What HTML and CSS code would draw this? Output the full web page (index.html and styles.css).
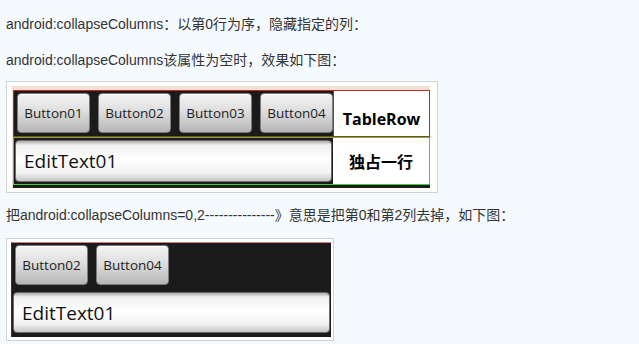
FILE: index.html
```html
<!DOCTYPE html>
<html lang="zh-CN">
<head>
  <meta charset="UTF-8">
  <title>collapseColumns</title>
  <link rel="stylesheet" href="styles.css">
</head>
<body>

  <p class="note">android:collapseColumns：以第0行为序，隐藏指定的列：</p>
  <p class="note">android:collapseColumns该属性为空时，效果如下图：</p>

  <div class="frame frame-wide">
    <div class="screen screen-full">
      <div class="trow trow-red">
        <div class="btn-bar">
          <span class="droid-btn">Button01</span>
          <span class="droid-btn">Button02</span>
          <span class="droid-btn">Button03</span>
          <span class="droid-btn">Button04</span>
        </div>
        <div class="side-cell side-label">TableRow</div>
      </div>
      <div class="trow trow-green">
        <div class="edit-slot">
          <div class="edit-text">EditText01</div>
        </div>
        <div class="side-cell side-cjk">独占一行</div>
      </div>
    </div>
  </div>

  <p class="note note-after">把android:collapseColumns=0,2---------------》意思是把第0和第2列去掉，如下图：</p>

  <div class="frame frame-narrow">
    <div class="screen screen-cut">
      <div class="btn-bar btn-bar-cut">
        <span class="droid-btn">Button02</span>
        <span class="droid-btn">Button04</span>
      </div>
      <div class="edit-slot edit-slot-cut">
        <div class="edit-text">EditText01</div>
      </div>
    </div>
  </div>

</body>
</html>
```

FILE: styles.css
```css
*{
  margin: 0;
  padding: 0;
  box-sizing: border-box;
}

body{
  background-color: #f5faff;
  color: #333333;
  font: 14px "Liberation Sans", "Noto Sans CJK SC", sans-serif;
  padding: 0 6px;
}

.note{
  line-height: 24px;
  margin: 12px 0 9px;
}
.note-after{
  margin: 10px 0 11px;
}

/* picture frames */
.frame{
  width: fit-content;
  background-color: #ffffff;
  border: 1px solid #cfd3d6;
}
.frame-wide{
  padding: 4px 7px 4px 5px;
}
.frame-narrow{
  padding: 3px 2px 3px 4px;
}

.screen{
  background-color: #1b1b1b;
  font-family: "Open Sans", "Noto Sans", sans-serif;
}
.screen-full{
  width: 418px;
  border-top: 4px solid #f0e1d3;
  border-left: 1px solid #f0e1d3;
  padding-bottom: 3px;
}
.screen-cut{
  width: 320px;
  border-top: 1px solid #d9787a;
  border-left: 1px solid #6e1c1c;
  padding-bottom: 4px;
}

/* table rows */
.trow{
  display: flex;
  width: 417px;
}
.trow-red{
  height: 47px;
  border: 1px solid #c0262c;
}
.trow-green{
  height: 48px;
  border: 1px solid #3ccf3c;
}

.btn-bar{
  display: flex;
  gap: 8px;
  width: 319px;
  padding: 2px 0 0 3px;
}
.trow-red .btn-bar{
  border-right: 1px solid #c0262c;
  width: 320px;
}
.btn-bar-cut{
  padding: 2px 0 0 3px;
  width: auto;
}

.droid-btn{
  width: 73px;
  height: 40px;
  display: flex;
  align-items: center;
  justify-content: center;
  font-size: 13.5px;
  color: #1e1e1e;
  border-radius: 4px;
  border: 1px solid #7c7c7c;
  background: linear-gradient(#f4f4f4, #dedede 45%, #b6b6b6);
  box-shadow: inset 0 1px 0 #ffffff;
}

.side-cell{
  flex: 1;
  background-color: #ffffff;
  display: flex;
  justify-content: center;
  color: #000000;
  font-weight: bold;
}
.side-label{
  align-items: flex-end;
  padding-bottom: 6px;
  font-size: 16px;
}
.side-cjk{
  align-items: center;
  font: bold 16px "Noto Sans CJK SC", sans-serif;
}

.edit-slot{
  width: 319px;
  padding: 2px 1px;
}
.edit-slot-cut{
  width: auto;
  padding: 7px 2px 0 1px;
}

.edit-text{
  height: 42px;
  display: flex;
  align-items: center;
  padding-left: 8px;
  font-size: 19px;
  color: #111111;
  border-radius: 4px;
  border: 1px solid #6c6c6c;
  background: linear-gradient(#a9a9a9, #efefef 4px, #ffffff 45%, #f1f1f1 80%, #c6c6c6);
}
.edit-slot-cut .edit-text{
  width: 317px;
  height: 41px;
}
```
